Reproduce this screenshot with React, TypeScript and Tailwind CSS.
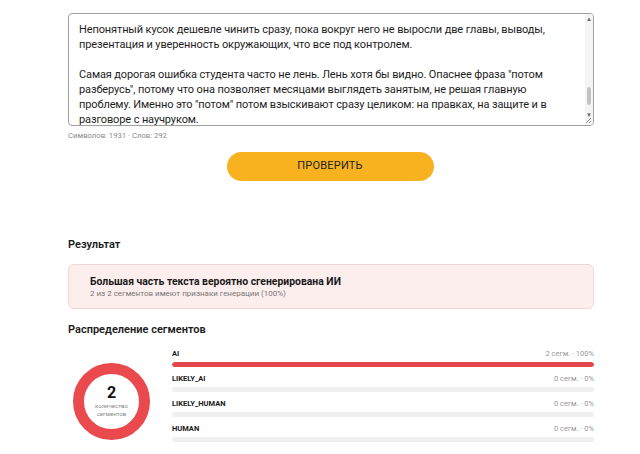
import React from "react";

const rows = [
  { label: "AI", value: "2 сегм. · 100%", pct: 100 },
  { label: "LIKELY_AI", value: "0 сегм. · 0%", pct: 0 },
  { label: "LIKELY_HUMAN", value: "0 сегм. · 0%", pct: 0 },
  { label: "HUMAN", value: "0 сегм. · 0%", pct: 0 },
];

export default function App() {
  return (
    <div className="w-[640px] h-[454px] bg-white overflow-hidden text-[#222]" style={{ fontFamily: 'Roboto, "Liberation Sans", sans-serif' }}>
      <div className="ml-[68px] w-[526px] pt-[13px]">
        {/* textarea */}
        <div className="relative h-[113px] border border-[#a0a0a0] rounded-[4px] overflow-hidden">
          <div className="pl-[10px] pt-[7.5px] text-[11px] tracking-[-0.12px] leading-[15px] text-[#1e1e1e] whitespace-nowrap">
            <div>Непонятный кусок дешевле чинить сразу, пока вокруг него не выросли две главы, выводы,</div>
            <div>презентация и уверенность окружающих, что все под контролем.</div>
            <div className="h-[15px]" />
            <div>Самая дорогая ошибка студента часто не лень. Лень хотя бы видно. Опаснее фраза "потом</div>
            <div>разберусь", потому что она позволяет месяцами выглядеть занятым, не решая главную</div>
            <div>проблему. Именно это "потом" потом взыскивают сразу целиком: на правках, на защите и в</div>
            <div>
              разговоре с{" "}
              <span className="underline decoration-wavy decoration-[#e05050] decoration-[1px] underline-offset-2">научруком</span>.
            </div>
          </div>
          {/* scrollbar */}
          <div className="absolute right-0 top-0 bottom-0 w-[8px] bg-[#f4f4f4] flex flex-col items-center">
            <div className="text-[6px] leading-[8px] text-[#666] mt-[1px]">▲</div>
            <div className="flex-1 w-full relative">
              <div className="absolute left-[2px] right-[2px] top-[64px] h-[18px] bg-[#c2c2c2] rounded-sm" />
            </div>
            <div className="text-[6px] leading-[8px] text-[#666] mb-[6px]">▼</div>
          </div>
          <svg className="absolute right-[1px] bottom-[1px]" width="7" height="7" viewBox="0 0 7 7">
            <path d="M6 1 L1 6 M6 4 L4 6" stroke="#999" strokeWidth="1" />
          </svg>
        </div>
        <div className="mt-[4px] text-[7.7px] text-[#8a8a8a] leading-[12px]">Символов: 1931 · Слов: 292</div>

        {/* button */}
        <div className="flex justify-center mt-[10px] pr-[2px]">
          <button className="w-[207px] h-[29px] rounded-full bg-[#f9b21f] text-[11px] text-[#222] tracking-[0.2px]">
            ПРОВЕРИТЬ
          </button>
        </div>

        <h2 className="mt-[56px] text-[11px] font-semibold leading-[16px] text-[#1a1a1a]">Результат</h2>

        <div className="mt-[11px] h-[45px] rounded-[6px] border border-[#f2d6d6] bg-[#fdeeee] pl-[21px] pt-[10px]">
          <div className="text-[10.4px] font-bold leading-[14px] text-[#1a1a1a]">Большая часть текста вероятно сгенерирована ИИ</div>
          <div className="text-[8px] leading-[10px] text-[#777]">2 из 2 сегментов имеют признаки генерации (100%)</div>
        </div>

        <h2 className="mt-[13px] text-[11px] font-semibold leading-[16px] text-[#1a1a1a]">Распределение сегментов</h2>

        <div className="mt-[11px] flex">
          <div className="w-[104px] pt-[14px] pl-[5px]">
            <div className="relative w-[77px] h-[77px]">
              <svg width="77" height="77" viewBox="0 0 77 77" className="absolute inset-0">
                <circle cx="38.5" cy="38.5" r="33" fill="none" stroke="#ea4a4e" strokeWidth="11" />
              </svg>
              <div className="absolute inset-0 flex flex-col items-center justify-center">
                <div className="text-[16px] font-bold leading-[18px] text-[#111] mt-[-2px]">2</div>
                <div className="text-[6px] leading-[8px] text-[#888]">количество</div>
                <div className="text-[6px] leading-[8px] text-[#888]">сегментов</div>
              </div>
            </div>
          </div>
          <div className="flex-1 flex flex-col gap-[7.5px]">
            {rows.map((r) => (
              <div key={r.label}>
                <div className="flex justify-between items-end h-[10px]">
                  <span className="text-[7.5px] font-bold leading-[10px] text-[#1a1a1a]">{r.label}</span>
                  <span className="text-[7.5px] leading-[10px] text-[#999]">{r.value}</span>
                </div>
                <div className="mt-[2.5px] h-[5px] rounded-full bg-[#f0f0f0] overflow-hidden">
                  <div className="h-full rounded-full bg-[#e4474c]" style={{ width: `${r.pct}%` }} />
                </div>
              </div>
            ))}
          </div>
        </div>
      </div>
    </div>
  );
}
